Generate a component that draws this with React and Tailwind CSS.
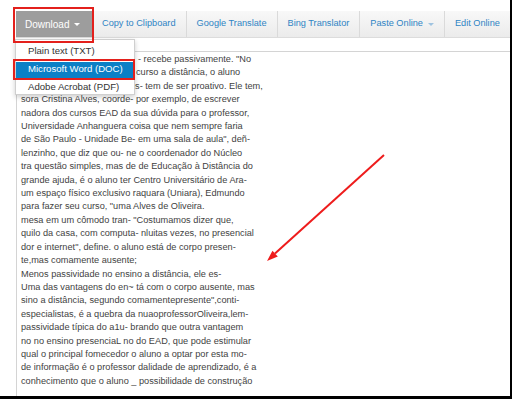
import React from "react";

// toolbar buttons after the Download menu
const tools = [
  { label: "Copy to Clipboard" },
  { label: "Google Translate" },
  { label: "Bing Translator" },
  { label: "Paste Online", caret: true },
  { label: "Edit Online", last: true },
];

const menuItems = ["Plain text (TXT)", "Microsoft Word (DOC)", "Adobe Acrobat (PDF)"];

// first three lines start under the open menu
const covered = [
  { w: "w-[117px]", text: '- recebe passivamente. "No' },
  { w: "w-[115px]", text: "curso a distância, o aluno" },
  { w: "w-[109px]", text: "es- tem de ser proativo. Ele tem," },
];

const lines = [
  "sora Cristina Alves, coorde- por exemplo, de escrever",
  "nadora dos cursos EAD da sua dúvida para o professor,",
  "Universidade Anhanguera coisa que nem sempre faria",
  'de São Paulo - Unidade Be- em uma sala de aula", deñ-',
  "lenzinho, que diz que ou- ne o coordenador do Núcleo",
  "tra questão simples, mas de de Educação à Distância do",
  "grande ajuda, é o aluno ter Centro Universitário de Ara-",
  "um espaço físico exclusivo raquara (Uniara), Edmundo",
  'para fazer seu curso, "uma Alves de Oliveira.',
  'mesa em um cômodo tran- "Costumamos dizer que,',
  "quilo da casa, com computa- nluitas vezes, no presencial",
  'dor e internet", define. o aluno está de corpo presen-',
  "te,mas comamente ausente;",
  "Menos passividade no ensino a distância, ele es-",
  "Uma das vantagens do en~ tá com o corpo ausente, mas",
  'sino a distância, segundo comamentepresente",conti-',
  "especialistas, é a quebra da nuaoprofessorOliveira,lem-",
  "passividade típica do a1u- brando que outra vantagem",
  "no no ensino presenciaL no do EAD, que pode estimular",
  "qual o principal fomecedor o aluno a optar por esta mo-",
  "de informação é o professor dalidade de aprendizado, é a",
  "conhecimento que o aluno _ possibilidade de construção",
];

const Caret = ({ color }) => (
  <span
    className={`ml-[5px] inline-block h-0 w-0 border-x-[3px] border-t-[3px] border-x-transparent ${color}`}
  />
);

const App = () => {
  return (
    <div
      className="relative h-[399px] w-[512px] overflow-hidden border-r-[2px] border-b-[3px] border-black bg-white"
      style={{ fontFamily: '"Liberation Sans", Arial, sans-serif' }}
    >
      <div className="flex h-full flex-col pl-[16px] pt-[11px]">
        {/* toolbar */}
        <div className="flex h-[27px] items-stretch border-b border-[#dcdcdc] bg-gradient-to-b from-[#f8f8f8] to-[#ebebeb]">
          <div className="flex w-[76px] shrink-0 items-center whitespace-nowrap bg-[#9d9d9d] pl-[9px] text-[10px] text-white">
            Download
            <Caret color="border-t-white" />
          </div>
          {tools.map((t) => (
            <div
              key={t.label}
              className={`flex shrink-0 items-center whitespace-nowrap px-[10px] text-[9.2px] text-[#2f84c4] ${
                t.last ? "" : "border-r border-[#dadada]"
              }`}
            >
              {t.label}
              {t.caret && <Caret color="border-t-[#9fc3e0]" />}
            </div>
          ))}
        </div>

        {/* text area */}
        <div className="mt-[13px] flex-1 border-t border-l border-[#d4d4d4] pl-[4px] pt-[1px] text-[9.2px] leading-[13.4px] text-[#3f3f3f]">
          {covered.map((l) => (
            <div key={l.text} className="whitespace-nowrap">
              <span className={`inline-block ${l.w}`} />
              {l.text}
            </div>
          ))}
          {lines.map((l) => (
            <div key={l} className="whitespace-nowrap">
              {l}
            </div>
          ))}
        </div>
      </div>

      {/* open Download menu */}
      <div className="absolute left-[15px] top-[39px] flex w-[120px] flex-col gap-[2.5px] border border-[#cfcfcf] bg-white pt-[3px] text-[9.6px] text-[#333] shadow-[0_2px_5px_rgba(0,0,0,0.2)]">
        {menuItems.map((m, i) => (
          <div
            key={m}
            className={`flex items-center pl-[12px] ${i === 1 ? "bg-[#0b80c6] text-white" : ""} ${
              i === 2 ? "h-[14px]" : "h-[16px]"
            }`}
          >
            {m}
          </div>
        ))}
      </div>

      {/* red annotation boxes */}
      <div className="absolute left-[13px] top-[7px] h-[36px] w-[81px] border-2 border-[#e3201c]" />
      <div className="absolute left-[13px] top-[59px] h-[21px] w-[122px] border-2 border-[#e3201c]" />

      {/* red arrow */}
      <svg className="absolute left-0 top-0" width="512" height="399">
        <line x1="384" y1="155" x2="275" y2="253.6" stroke="#ee1c1c" strokeWidth="2" />
        <polygon points="267,261 277.8,256.6 272.5,250.7" fill="#ee1c1c" />
      </svg>
    </div>
  );
};

export default App;
